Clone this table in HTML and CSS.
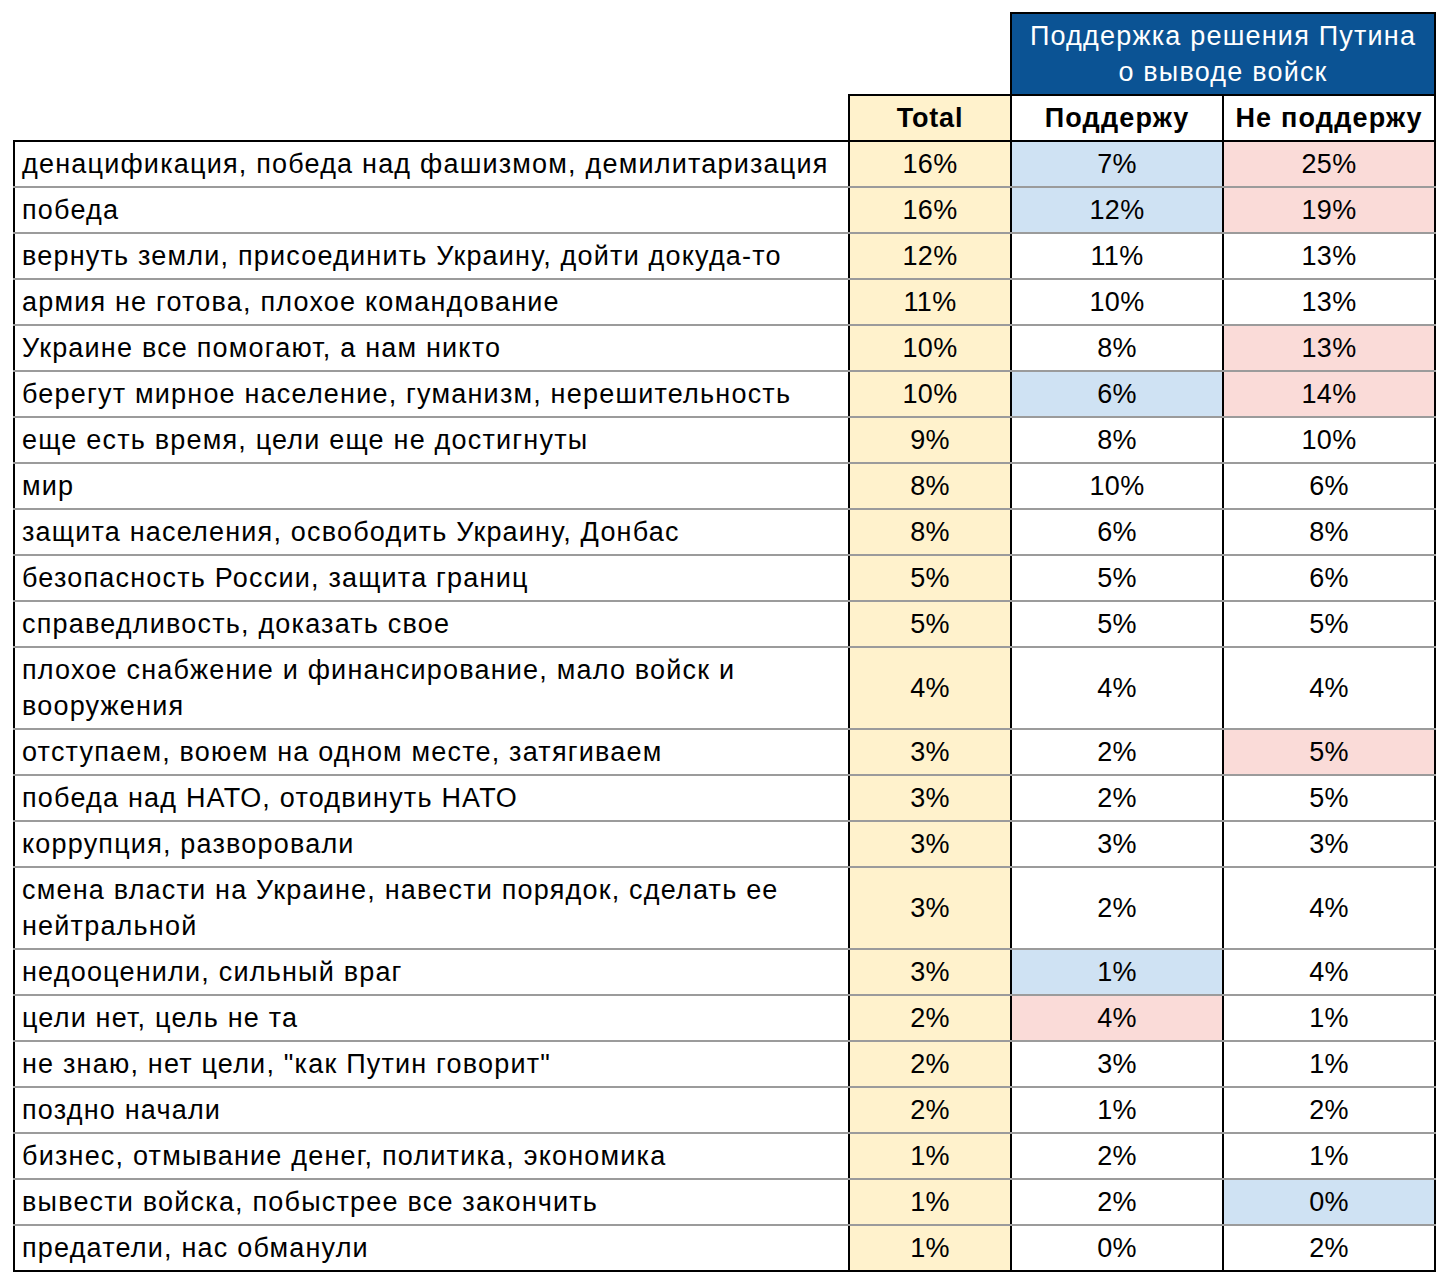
FILE: index.html
```html
<!DOCTYPE html>
<html lang="ru">
<head>
  <meta charset="UTF-8" />
  <title>Поддержка решения Путина о выводе войск</title>
  <link rel="stylesheet" href="styles.css">
</head>
<body>
  <table class="survey">
    <colgroup>
      <col class="c-label">
      <col class="c-total">
      <col class="c-yes">
      <col class="c-no">
    </colgroup>
    <thead>
      <tr>
        <td class="blank" colspan="2"></td>
        <th class="group" colspan="2">Поддержка решения Путина<br>о выводе войск</th>
      </tr>
      <tr>
        <td class="blank"></td>
        <th class="total">Total</th>
        <th>Поддержу</th>
        <th>Не поддержу</th>
      </tr>
    </thead>
    <tbody>
      <tr><td>денацификация, победа над фашизмом, демилитаризация</td><td class="total">16%</td><td class="lo">7%</td><td class="hi">25%</td></tr>
      <tr><td>победа</td><td class="total">16%</td><td class="lo">12%</td><td class="hi">19%</td></tr>
      <tr><td>вернуть земли, присоединить Украину, дойти докуда-то</td><td class="total">12%</td><td>11%</td><td>13%</td></tr>
      <tr><td>армия не готова, плохое командование</td><td class="total">11%</td><td>10%</td><td>13%</td></tr>
      <tr><td>Украине все помогают, а нам никто</td><td class="total">10%</td><td>8%</td><td class="hi">13%</td></tr>
      <tr><td>берегут мирное население, гуманизм, нерешительность</td><td class="total">10%</td><td class="lo">6%</td><td class="hi">14%</td></tr>
      <tr><td>еще есть время, цели еще не достигнуты</td><td class="total">9%</td><td>8%</td><td>10%</td></tr>
      <tr><td>мир</td><td class="total">8%</td><td>10%</td><td>6%</td></tr>
      <tr><td>защита населения, освободить Украину, Донбас</td><td class="total">8%</td><td>6%</td><td>8%</td></tr>
      <tr><td>безопасность России, защита границ</td><td class="total">5%</td><td>5%</td><td>6%</td></tr>
      <tr><td>справедливость, доказать свое</td><td class="total">5%</td><td>5%</td><td>5%</td></tr>
      <tr><td>плохое снабжение и финансирование, мало войск и вооружения</td><td class="total">4%</td><td>4%</td><td>4%</td></tr>
      <tr><td>отступаем, воюем на одном месте, затягиваем</td><td class="total">3%</td><td>2%</td><td class="hi">5%</td></tr>
      <tr><td>победа над НАТО, отодвинуть НАТО</td><td class="total">3%</td><td>2%</td><td>5%</td></tr>
      <tr><td>коррупция, разворовали</td><td class="total">3%</td><td>3%</td><td>3%</td></tr>
      <tr><td>смена власти на Украине, навести порядок, сделать ее нейтральной</td><td class="total">3%</td><td>2%</td><td>4%</td></tr>
      <tr><td>недооценили, сильный враг</td><td class="total">3%</td><td class="lo">1%</td><td>4%</td></tr>
      <tr><td>цели нет, цель не та</td><td class="total">2%</td><td class="hi">4%</td><td>1%</td></tr>
      <tr><td>не знаю, нет цели, "как Путин говорит"</td><td class="total">2%</td><td>3%</td><td>1%</td></tr>
      <tr><td>поздно начали</td><td class="total">2%</td><td>1%</td><td>2%</td></tr>
      <tr><td>бизнес, отмывание денег, политика, экономика</td><td class="total">1%</td><td>2%</td><td>1%</td></tr>
      <tr><td>вывести войска, побыстрее все закончить</td><td class="total">1%</td><td>2%</td><td class="lo">0%</td></tr>
      <tr><td>предатели, нас обманули</td><td class="total">1%</td><td>0%</td><td>2%</td></tr>
    </tbody>
  </table>
</body>
</html>
```

FILE: styles.css
```css
/* RESET */
* {
  box-sizing: border-box;
}

body {
  margin: 0;
  padding: 12px 0 0 13px;
  background: #fff;
  font-family: "Liberation Sans", Arial, sans-serif;
  color: #000;
}

.survey {
  border-collapse: collapse;
  table-layout: fixed;
  width: 1423px;
  font-size: 27px;
  line-height: 36px;
}

.c-label { width: 835px; }
.c-total { width: 162px; }
.c-yes { width: 212px; }
.c-no { width: 212px; }

.survey td,
.survey th {
  padding: 4px 7px;
  vertical-align: middle;
}

/* header */
.survey thead th {
  border: 2px solid #000;
  text-align: center;
  font-weight: bold;
  background: #fff;
  white-space: nowrap;
  letter-spacing: 1.2px;
}
.survey thead .blank {
  border: none;
}
.survey thead th.group {
  background: #0b5394;
  color: #fff;
  font-weight: normal;
}
.survey thead th.total {
  background: #fff2cc;
  letter-spacing: 0.8px;
}

/* body */
.survey tbody td {
  border-top: 2px solid #9b9b9b;
  border-bottom: 2px solid #9b9b9b;
  border-left: 2px solid #000;
  border-right: 2px solid #000;
  text-align: center;
  letter-spacing: 0.3px;
}
.survey tbody td:first-child {
  text-align: left;
  letter-spacing: 1.2px;
}
.survey tbody tr:first-child td {
  border-top: 2px solid #000;
}
.survey tbody tr:last-child td {
  border-bottom: 2px solid #000;
}

.survey td.total {
  background: #fff2cc;
}
.survey td.lo {
  background: #cfe2f3;
}
.survey td.hi {
  background: #fadbd8;
}
```
